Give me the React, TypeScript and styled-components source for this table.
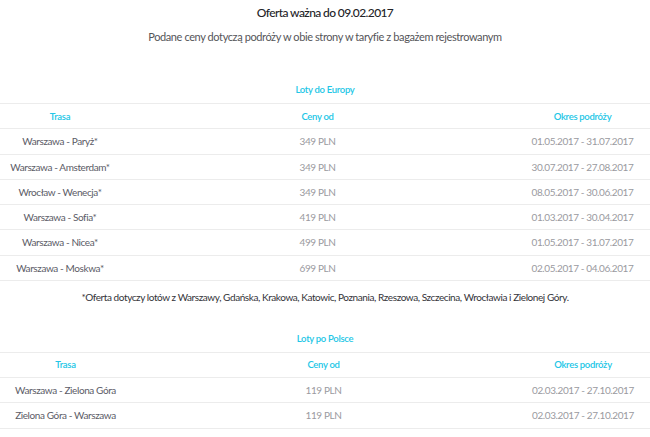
import styled, { createGlobalStyle } from 'styled-components';

const GlobalStyle = createGlobalStyle`
  body {
    margin: 0;
    background: #fff;
    font-family: Lato, "Open Sans", "Liberation Sans", sans-serif;
  }
`;

const Page = styled.div`
  display: flex;
  flex-direction: column;
  align-items: stretch;
  padding-top: 5px;
`;

const Title = styled.h1`
  margin: 0;
  text-align: center;
  font-size: 12px;
  line-height: 16px;
  font-weight: 500;
  letter-spacing: -0.6px;
  color: #232327;
`;

const Subtitle = styled.p`
  margin: 8px 0 0;
  text-align: center;
  font-size: 11px;
  line-height: 16px;
  letter-spacing: -0.4px;
  color: #555559;
`;

const Section = styled.section<{ $gap: number }>`
  margin-top: ${({ $gap }) => $gap}px;
`;

const SectionTitle = styled.h2`
  margin: 0 0 6px;
  text-align: center;
  font-size: 9.5px;
  line-height: 14px;
  font-weight: 600;
  letter-spacing: -0.3px;
  color: #22c6e6;
`;

const Table = styled.table`
  width: 100%;
  table-layout: fixed;
  border-collapse: separate;
  border-spacing: 0;
  border-top: 1px solid #ececec;
`;

const HeadCell = styled.th`
  height: 24.25px;
  padding: 0;
  border-bottom: 1px solid #ececec;
  text-align: center;
  font-size: 9.5px;
  font-weight: 600;
  letter-spacing: -0.3px;
  color: #22c6e6;
`;

const Cell = styled.td<{ $tone: 'dark' | 'light' }>`
  height: 24.25px;
  padding: 0;
  border-bottom: 1px solid #ececec;
  text-align: center;
  white-space: nowrap;
  font-size: 10px;
  letter-spacing: -0.4px;
  color: ${({ $tone }) => ($tone === 'dark' ? '#5b5b66' : '#9a9aa0')};
`;

const Note = styled.p`
  margin: 9px 0 0;
  text-align: center;
  font-size: 10px;
  line-height: 14px;
  letter-spacing: -0.42px;
  color: #333338;
`;

type Row = { route: string; price: string; period: string };

const europe: Row[] = [
  { route: 'Warszawa - Paryż*', price: '349 PLN', period: '01.05.2017 - 31.07.2017' },
  { route: 'Warszawa - Amsterdam*', price: '349 PLN', period: '30.07.2017 - 27.08.2017' },
  { route: 'Wrocław - Wenecja*', price: '349 PLN', period: '08.05.2017 - 30.06.2017' },
  { route: 'Warszawa - Sofia*', price: '419 PLN', period: '01.03.2017 - 30.04.2017' },
  { route: 'Warszawa - Nicea*', price: '499 PLN', period: '01.05.2017 - 31.07.2017' },
  { route: 'Warszawa - Moskwa*', price: '699 PLN', period: '02.05.2017 - 04.06.2017' },
];

const poland: Row[] = [
  { route: 'Warszawa - Zielona Góra', price: '119 PLN', period: '02.03.2017 - 27.10.2017' },
  { route: 'Zielona Góra - Warszawa', price: '119 PLN', period: '02.03.2017 - 27.10.2017' },
];

function FareTable({ rows, first, last }: { rows: Row[]; first: number; last: number }) {
  return (
    <Table>
      <colgroup>
        <col style={{ width: first }} />
        <col />
        <col style={{ width: last }} />
      </colgroup>
      <thead>
        <tr>
          <HeadCell>Trasa</HeadCell>
          <HeadCell>Ceny od</HeadCell>
          <HeadCell>Okres podróży</HeadCell>
        </tr>
      </thead>
      <tbody>
        {rows.map((r) => (
          <tr key={r.route}>
            <Cell $tone="dark">{r.route}</Cell>
            <Cell $tone="light">{r.price}</Cell>
            <Cell $tone="light">{r.period}</Cell>
          </tr>
        ))}
      </tbody>
    </Table>
  );
}

export default function App() {
  return (
    <Page>
      <GlobalStyle />
      <Title>Oferta ważna do 09.02.2017</Title>
      <Subtitle>Podane ceny dotyczą podróży w obie strony w taryfie z bagażem rejestrowanym</Subtitle>

      <Section $gap={38}>
        <SectionTitle>Loty do Europy</SectionTitle>
        <FareTable rows={europe} first={120} last={135} />
        <Note>
          *Oferta dotyczy lotów z Warszawy, Gdańska, Krakowa, Katowic, Poznania, Rzeszowa, Szczecina, Wrocławia i Zielonej Góry.
        </Note>
      </Section>

      <Section $gap={28}>
        <SectionTitle>Loty po Polsce</SectionTitle>
        <FareTable rows={poland} first={131} last={134} />
      </Section>
    </Page>
  );
}
